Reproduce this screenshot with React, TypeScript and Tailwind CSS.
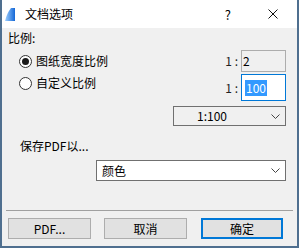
const font = { fontFamily: '"Noto Sans CJK SC", "Noto Sans", sans-serif' };

function Radio({ checked }: { checked?: boolean }) {
  return (
    <span className="flex h-[13px] w-[13px] shrink-0 items-center justify-center rounded-full border border-[#333] bg-white">
      {checked && <span className="h-[7px] w-[7px] rounded-full bg-[#1a1a1a]" />}
    </span>
  );
}

function Chevron() {
  return (
    <svg width="9" height="5" viewBox="0 0 9 5" className="shrink-0">
      <path d="M0.5 0.5 L4.5 4.5 L8.5 0.5" fill="none" stroke="#444" strokeWidth="1" />
    </svg>
  );
}

export default function App() {
  return (
    <div
      className="flex h-[248px] w-[299px] flex-col overflow-hidden border-x-2 border-b-2 border-[#4f6f8f] bg-[#f0f0f0] text-[12px] leading-none text-black"
      style={font}
    >
      {/* title bar */}
      <div className="flex h-[28px] shrink-0 items-center bg-white">
        <svg width="10" height="13" viewBox="0 0 10 13" className="ml-[3px]">
          <defs>
            <linearGradient id="g" x1="0" y1="0" x2="1" y2="0">
              <stop offset="0" stopColor="#9fd0ff" />
              <stop offset="1" stopColor="#1467d6" />
            </linearGradient>
          </defs>
          <path d="M0 13 Q2 5 6 0 L10 0 L10 13 Z" fill="url(#g)" />
        </svg>
        <span className="ml-[10px] text-[12px]">文档选项</span>
        <span className="ml-auto mr-[37px] text-[13px]">?</span>
        <svg width="10" height="10" viewBox="0 0 10 10" className="mr-[19px]">
          <path d="M0.5 0.5 L9.5 9.5 M9.5 0.5 L0.5 9.5" stroke="#111" strokeWidth="1" />
        </svg>
      </div>

      {/* body */}
      <div className="flex flex-1 flex-col pr-[11px]">
        <div className="ml-[6px] mt-[4px] h-[18px]">比例:</div>

        <div className="flex h-[22px] items-center">
          <span className="ml-[17px]">
            <Radio checked />
          </span>
          <span className="ml-[4px]">图纸宽度比例</span>
          <span className="ml-auto mr-[3px] text-[#222]">1 :</span>
          <div className="flex h-[22px] w-[45px] items-center border border-[#adadad] bg-[#f0f0f0] pl-[1px]">
            2
          </div>
        </div>

        <div className="mt-[2px] flex h-[27px]">
          <span className="ml-[17px] mt-[3px]">
            <Radio />
          </span>
          <span className="ml-[4px] mt-[3px]">自定义比例</span>
          <span className="ml-auto mr-[3px] mt-[8px] text-[#222]">1 :</span>
          <div className="flex h-[27px] w-[45px] items-center border border-[#0078d7] bg-white pl-[3px]">
            <span className="bg-[#3399ff] px-[1px] py-[2px] text-white">100</span>
          </div>
        </div>

        <div className="mt-[5px] flex h-[20px] w-[113px] shrink-0 items-center self-end border border-[#707070] bg-[#f0f0f0] pl-[23px] pr-[5px]">
          <span>1:100</span>
          <span className="ml-auto">
            <Chevron />
          </span>
        </div>

        <div className="ml-[18px] mt-[14px] h-[14px]">保存PDF以...</div>

        <div className="mt-[6px] flex h-[21px] w-[190px] shrink-0 items-center self-end border border-[#707070] bg-white pl-[5px] pr-[5px]">
          <span>颜色</span>
          <span className="ml-auto">
            <Chevron />
          </span>
        </div>

        <div className="ml-[4px] mt-[29px] h-px w-[287px] bg-[#a0a0a0]" />

        <div className="mt-[7px] flex h-[21px] items-stretch">
          <button className="ml-[6px] w-[83px] border border-[#adadad] bg-[#e1e1e1]">PDF...</button>
          <button className="ml-[13px] w-[83px] border border-[#adadad] bg-[#e1e1e1]">取消</button>
          <button className="ml-[14px] w-[82px] border-2 border-[#0078d7] bg-[#e1e1e1]">确定</button>
        </div>
      </div>
    </div>
  );
}
